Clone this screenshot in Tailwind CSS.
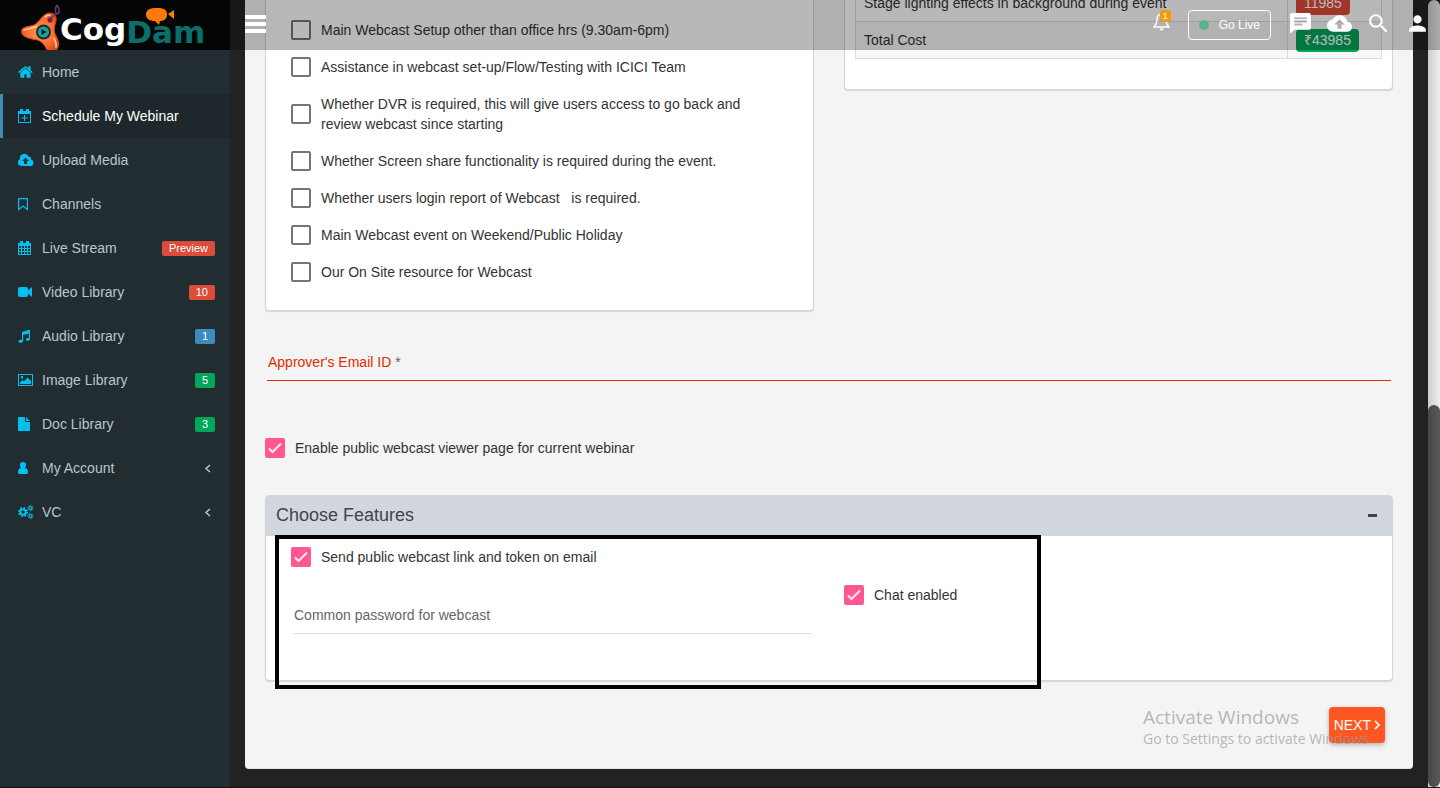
<!DOCTYPE html>
<html lang="en">
<head>
<meta charset="utf-8">
<title>CogDam - Schedule My Webinar</title>
<script src="https://cdn.jsdelivr.net/npm/@tailwindcss/browser@4"></script>
</head>
<body class="relative flex h-screen overflow-hidden border-b border-[#1c1319] bg-[#222222] font-['Liberation_Sans',sans-serif] text-sm text-[#333333]">

<aside class="flex w-[230px] shrink-0 flex-col bg-[#222d32]">
  <a href="#" aria-label="CogDam" class="relative flex h-[50px] overflow-hidden bg-[#040606] pl-5">
    <svg class="h-[50px] w-10 shrink-0" viewBox="0 0 40 50">
      <defs><radialGradient id="spin" cx="50%" cy="50%" r="60%"><stop offset="0" stop-color="#ff9a5a"/><stop offset=".6" stop-color="#fb6e35"/><stop offset="1" stop-color="#d9440f"/></radialGradient></defs>
      <path d="M1.500 31.500C1.500 26 9 27 14 25c6-3 8-11 15-12 7 0 8 5 6.500 10-1.500 5-2 8 0 12 3 5 4.500 11 1 15-3 3-8 2-10-1-2-4-4-7-9-9-5-1-16-2-16-8.500z" fill="url(#spin)" stroke="#d9480f"/>
      <path d="M4 30c4-1.500 8-1.500 12-3.500M25 17c1-1.500 3-2 5-2M34 38c1 3 3 6 2 9" fill="none" stroke="#ffd0a8" stroke-width="1.500" stroke-linecap="round"/>
      <circle cx="23.500" cy="32" r="7.500" fill="#1c2a2c"/><circle cx="23.500" cy="32" r="5.500" fill="#19a3a0"/>
      <path d="M21.500 29v6l5-3z" fill="#071314"/>
      <path d="M37 5c-3 4-1 6-1 9 4 0 4-4 1-9M35 14c-1 3-4 3-6 6" fill="none" stroke="#6b3a6b" stroke-width="1.500"/>
      <circle cx="30" cy="20" r="2.500" fill="#5a2a55"/>
    </svg>
    <span class="mt-[9px] font-['DejaVu_Sans',sans-serif] text-[31px] leading-10 font-bold text-white">Cog</span>
    <span class="mt-3 font-['DejaVu_Sans',sans-serif] text-[31px] leading-10 font-bold text-[#0b706c]">Dam</span>
    <svg class="absolute top-[7px] left-[146px] h-[18px] w-[29px]" viewBox="0 0 29 18"><path d="M10 1h2c6 0 9 2 9 6.500S18 14 14 14l-1 4-4-4C4 14 0 12 0 7.500S4 1 10 1zM22 7l6-4v9z" fill="#ff7a0a"/></svg>
  </a>

  <nav class="flex flex-col text-[#b8c7ce] [&_svg]:h-[14px] [&_svg]:w-[16px] [&_svg]:fill-current [&_svg]:text-[#00c0ef]">
    <a href="#" class="flex h-11 items-center gap-2 border-l-3 border-transparent px-[15px]"><svg viewBox="0 128 1792 1536"><path d="M1408 992v480q0 26-19 45t-45 19H960v-384H704v384H320q-26 0-45-19t-19-45V992l576-477 575 474q1 2 1 3zm223-69l-62 74q-8 9-21 11h-3q-13 0-21-7L832 424l-692 577q-12 8-24 7-13-2-21-11l-62-74q-8-10-7-23.500T37 878l719-599q32-26 76-26t76 26l244 204V288q0-14 9-23t23-9h192q14 0 23 9t9 23v408l219 182q10 8 11 21.500t-7 23.500z"/></svg>Home</a>
    <a href="#" aria-current="page" class="flex h-11 items-center gap-2 border-l-3 border-[#3c8dbc] bg-[#1e282c] px-[15px] text-white"><svg viewBox="0 0 16 14"><path fill-rule="evenodd" d="M0 2h2V0h3v2h3V0h3v2h2v12H0zM1 5v8h11V5zM6 6h1v2.500h2.500v1H7V12H6V9.500H3.500v-1H6z"/></svg>Schedule My Webinar</a>
    <a href="#" class="flex h-11 items-center gap-2 border-l-3 border-transparent px-[15px]"><svg viewBox="0 0 16 14"><path fill-rule="evenodd" d="M3.500 13A3.500 3.500 0 0 1 2 6.300 4.500 4.500 0 0 1 10.500 3.500 2.300 2.300 0 0 1 13 6.500 3.300 3.300 0 0 1 12 13zM7.500 4.500 4.200 8H6v3h3V8h1.800z"/></svg>Upload Media</a>
    <a href="#" class="flex h-11 items-center gap-2 border-l-3 border-transparent px-[15px]"><svg viewBox="0 0 16 14"><path d="M.6 1.600h8.800v11L5 9 .6 12.600z" style="fill:none" stroke="currentColor" stroke-width="1.200"/></svg>Channels</a>
    <a href="#" class="flex h-11 items-center gap-2 border-l-3 border-transparent px-[15px]"><svg viewBox="0 0 16 14"><path fill-rule="evenodd" d="M0 2h2V0h3v2h3V0h3v2h2v12H0zM1 5v2h2V5zm3 0v2h2V5zm3 0v2h2V5zm3 0v2h2V5zM1 8v2h2V8zm3 0v2h2V8zm3 0v2h2V8zm3 0v2h2V8zM1 11v2h2v-2zm3 0v2h2v-2zm3 0v2h2v-2zm3 0v2h2v-2z"/></svg>Live Stream<span class="ml-auto rounded-xs bg-[#dd4b39] px-[7px] text-[11px] leading-[15px] text-white">Preview</span></a>
    <a href="#" class="flex h-11 items-center gap-2 border-l-3 border-transparent px-[15px]"><svg viewBox="0 0 16 14"><path d="M2 2h6a2 2 0 0 1 2 2v1.500L14 2v10l-4-3.500V10a2 2 0 0 1-2 2H2a2 2 0 0 1-2-2V4a2 2 0 0 1 2-2z"/></svg>Video Library<span class="ml-auto rounded-xs bg-[#dd4b39] px-[7px] text-[11px] leading-[15px] text-white">10</span></a>
    <a href="#" class="flex h-11 items-center gap-2 border-l-3 border-transparent px-[15px]"><svg viewBox="0 0 16 14"><path d="M4 3l8-2.500V10c0 2-4 2.500-4 .5 0-1 1.500-1.600 2.800-1.300V4.500L5.200 6v6c0 2-4.700 2.500-4.700.4C.5 11.200 2.600 10.500 4 11z"/></svg>Audio Library<span class="ml-auto rounded-xs bg-[#3c8dbc] px-[7px] text-[11px] leading-[15px] text-white">1</span></a>
    <a href="#" class="flex h-11 items-center gap-2 border-l-3 border-transparent px-[15px]"><svg viewBox="0 0 16 14"><path fill-rule="evenodd" d="M0 1h15v12H0zM1 2v10h13V2zM3 3h2v2.500H3zM2 11V9.500L4.500 7 6 8.500 9.500 4.500 13 8v3z"/></svg>Image Library<span class="ml-auto rounded-xs bg-[#00a65a] px-[7px] text-[11px] leading-[15px] text-white">5</span></a>
    <a href="#" class="flex h-11 items-center gap-2 border-l-3 border-transparent px-[15px]"><svg viewBox="0 0 16 14"><path d="M0 0h7v5h5v9H0zM8 0l4 4H8z"/></svg>Doc Library<span class="ml-auto rounded-xs bg-[#00a65a] px-[7px] text-[11px] leading-[15px] text-white">3</span></a>
    <a href="#" class="flex h-11 items-center gap-2 border-l-3 border-transparent px-[15px]"><svg viewBox="0 0 16 14"><path d="M5 1c4 0 3.500 4 2 6 2 0 3 2 3 4s-1 2-2 2H2c-1 0-2 0-2-2s1-4 3-4C1.500 5 1 1 5 1z"/></svg>My Account<svg class="ml-auto text-[#b8c7ce]!" viewBox="0 0 16 14"><path d="M11 4 7 7.500 11 11" style="fill:none" stroke="currentColor" stroke-width="1.500"/></svg></a>
    <a href="#" class="flex h-11 items-center gap-2 border-l-3 border-transparent px-[15px]"><svg viewBox="0 0 16 14"><g style="fill:none" stroke="currentColor"><circle cx="5" cy="7" r="2.800" stroke-width="2"/><circle cx="5" cy="7" r="4.300" stroke-width="1.600" stroke-dasharray="1.690"/><circle cx="12.500" cy="3" r="1.500" stroke-width="1.200"/><circle cx="12.500" cy="3" r="2.500" stroke-dasharray="1.310"/><circle cx="12.500" cy="11" r="1.500" stroke-width="1.200"/><circle cx="12.500" cy="11" r="2.500" stroke-dasharray="1.310"/></g></svg>VC<svg class="ml-auto text-[#b8c7ce]!" viewBox="0 0 16 14"><path d="M11 4 7 7.500 11 11" style="fill:none" stroke="currentColor" stroke-width="1.500"/></svg></a>
  </nav>
</aside>

<main class="min-w-0 flex-1 overflow-hidden px-[15px]">
  <form class="-mt-[30px] rounded-b border-b border-[#e4e4e4] bg-[#f4f4f4] px-5 pb-[25px]">
    <div class="grid grid-cols-2 items-start gap-[30px]">
      <section class="rounded-sm border border-[#d2d6de] bg-white px-[25px] pt-[41px] pb-[19px] shadow-[0_1px_1px_#d2d6de]">
        <label class="flex items-center gap-2.5 pt-2 pb-[9px] leading-5"><input type="checkbox" class="size-5 shrink-0 appearance-none rounded-xs border-2 border-[#757575]">Main Webcast Setup other than office hrs (9.30am-6pm)</label>
        <label class="flex items-center gap-2.5 pt-2 pb-[9px] leading-5"><input type="checkbox" class="size-5 shrink-0 appearance-none rounded-xs border-2 border-[#757575]">Assistance in webcast set-up/Flow/Testing with ICICI Team</label>
        <label class="flex items-center gap-2.5 pt-2 pb-[9px] leading-5"><input type="checkbox" class="size-5 shrink-0 appearance-none rounded-xs border-2 border-[#757575]"><span>Whether DVR is required, this will give users access to go back and<br>review webcast since starting</span></label>
        <label class="flex items-center gap-2.5 pt-2 pb-[9px] leading-5"><input type="checkbox" class="size-5 shrink-0 appearance-none rounded-xs border-2 border-[#757575]">Whether Screen share functionality is required during the event.</label>
        <label class="flex items-center gap-2.5 pt-2 pb-[9px] leading-5"><input type="checkbox" class="size-5 shrink-0 appearance-none rounded-xs border-2 border-[#757575]">Whether users login report of Webcast &nbsp; is required.</label>
        <label class="flex items-center gap-2.5 pt-2 pb-[9px] leading-5"><input type="checkbox" class="size-5 shrink-0 appearance-none rounded-xs border-2 border-[#757575]">Main Webcast event on Weekend/Public Holiday</label>
        <label class="flex items-center gap-2.5 pt-2 pb-[9px] leading-5"><input type="checkbox" class="size-5 shrink-0 appearance-none rounded-xs border-2 border-[#757575]">Our On Site resource for Webcast</label>
      </section>
      <section class="rounded-sm border border-[#d2d6de] bg-white px-2.5 pt-[13px] pb-[30px] shadow-[0_1px_1px_#d2d6de]">
        <table class="w-full border-collapse leading-5">
          <tbody>
            <tr class="h-[37px]"><td class="border border-[#dddddd] px-2">Stage lighting effects in background during event</td><td class="w-[94px] border border-[#dddddd] px-2"><span class="inline-block rounded-sm bg-[#dd4b39] px-2 leading-[23px] text-white">11985</span></td></tr>
            <tr class="h-[37px] bg-[#f7f7f7]"><td class="border border-[#dddddd] px-2">Total Cost</td><td class="border border-[#dddddd] px-2"><span class="inline-block rounded-sm bg-[#00a65a] px-2 leading-[23px] text-white">₹43985</span></td></tr>
          </tbody>
        </table>
      </section>
    </div>

    <div class="relative mx-0.5 mt-[34px]">
      <label for="approver" class="pointer-events-none absolute top-[7px] left-px leading-5 text-[#dd2c00]">Approver's Email ID <span class="text-[#666666]">*</span></label>
      <input id="approver" type="email" required class="block h-9 w-full border-b border-[#dd2c00] bg-transparent shadow-none outline-none">
    </div>

    <label class="mt-[57px] flex items-center gap-2.5 leading-5">
      <span class="grid size-5 shrink-0"><input type="checkbox" checked class="col-start-1 row-start-1 size-5 appearance-none rounded-xs bg-[#ff5792]"><svg class="pointer-events-none col-start-1 row-start-1 size-5" viewBox="0 0 20 20" fill="none"><path d="M4 10.500 7.500 14 16 5.500" stroke="#ffe9f1" stroke-width="2"/></svg></span>
      Enable public webcast viewer page for current webinar
    </label>

    <section class="relative mt-[37px] rounded-sm border border-[#d2d6de] bg-white shadow-[0_1px_1px_#d2d6de]">
      <header class="flex h-10 items-center justify-between bg-[#d2d6de] pr-[15px] pb-0.5 pl-2.5">
        <h3 class="text-lg leading-5 text-[#444444]">Choose Features</h3>
        <button type="button" aria-label="Collapse" class="h-[3px] w-[9px] bg-[#444444]"></button>
      </header>
      <div class="grid grid-cols-2 gap-[30px] pb-[46px]">
        <div class="pt-[11px] pl-[25px]">
          <label class="flex items-center gap-2.5 leading-5">
            <span class="grid size-5 shrink-0"><input type="checkbox" checked class="col-start-1 row-start-1 size-5 appearance-none rounded-xs bg-[#ff5792]"><svg class="pointer-events-none col-start-1 row-start-1 size-5" viewBox="0 0 20 20" fill="none"><path d="M4 10.500 7.500 14 16 5.500" stroke="#ffe9f1" stroke-width="2"/></svg></span>
            Send public webcast link and token on email
          </label>
          <div class="mx-0.5 mt-[31px]">
            <input type="text" aria-label="Common password for webcast" placeholder="Common password for webcast" class="block h-9 w-full border-b border-[#dddddd] pb-px pl-px outline-none placeholder:text-[#666666]">
          </div>
        </div>
        <div class="pt-[49px]">
          <label class="flex items-center gap-2.5 leading-5">
            <span class="grid size-5 shrink-0"><input type="checkbox" checked class="col-start-1 row-start-1 size-5 appearance-none rounded-xs bg-[#ff5792]"><svg class="pointer-events-none col-start-1 row-start-1 size-5" viewBox="0 0 20 20" fill="none"><path d="M4 10.500 7.500 14 16 5.500" stroke="#ffe9f1" stroke-width="2"/></svg></span>
            Chat enabled
          </label>
        </div>
      </div>
      <div class="pointer-events-none absolute top-[39px] left-[9px] h-[154px] w-[766px] border-4 border-black"></div>
    </section>

    <div class="mt-[26px] flex justify-end pr-2">
      <button type="button" class="flex h-9 items-center gap-[3px] rounded-sm bg-[#ff5722] px-[5px] text-white shadow-[0_2px_5px_rgba(0,0,0,.26)]">NEXT<svg class="h-2.5 w-1.5" viewBox="0 0 6 10" fill="none"><path d="M1 1l4 4-4 4" stroke="#fff" stroke-width="1.700"/></svg></button>
    </div>
  </form>
</main>

<div class="flex w-3 shrink-0 flex-col rounded-t-full bg-linear-to-r from-[#cccccc] to-[#f0f0f0] pt-[405px]">
  <div class="flex-1 rounded-full bg-linear-to-r from-[#474747] to-[#585858]"></div>
</div>

<header class="absolute top-0 right-0 left-[230px] flex h-[50px] items-center bg-black/28 pr-2.5 pl-[15px] text-white">
  <button type="button" aria-label="Toggle navigation" class="flex flex-col gap-[3px] pb-0.5"><span class="h-1 w-[21px] bg-white"></span><span class="h-1 w-[21px] bg-white"></span><span class="h-1 w-[21px] bg-white"></span></button>
  <button type="button" aria-label="Notifications" class="relative mr-[18px] mb-[7px] ml-auto">
    <svg class="h-[19px] w-[17px]" viewBox="0 0 17 19" fill="none"><path d="M8.500 2C5 2 4 4.500 4 8s-1 5-3 7h15c-2-2-3-3.500-3-7s-1-6-4.500-6z" stroke="#fff" stroke-width="1.400"/><path d="M6.500 16.500h4a2 2 0 0 1-4 0z" fill="#fff"/></svg>
    <span class="absolute -top-0.5 left-[7px] rounded-xs bg-[#f39c12] px-[3px] text-[9px] leading-3">1</span>
  </button>
  <button type="button" class="mr-[17px] flex h-[30px] items-center gap-2.5 rounded-sm border border-white px-2.5 text-xs"><span class="size-2.5 rounded-full bg-[#5faf8b]"></span>Go Live</button>
  <div class="flex gap-[14px] pb-1 [&_svg]:size-[25px] [&_svg]:fill-white">
    <button type="button" aria-label="Messages"><svg viewBox="0 0 24 24"><path d="M20 2H4c-1.100 0-1.990.9-1.990 2L2 22l4-4h14c1.100 0 2-.9 2-2V4c0-1.100-.9-2-2-2zM6 9h12v2H6V9zm8 5H6v-2h8v2zm4-6H6V6h12v2z"/></svg></button>
    <button type="button" aria-label="Upload"><svg viewBox="0 0 24 24"><path d="M19.350 10.040C18.670 6.590 15.640 4 12 4 9.110 4 6.600 5.640 5.350 8.040 2.340 8.360 0 10.910 0 14c0 3.310 2.690 6 6 6h13c2.760 0 5-2.240 5-5 0-2.640-2.050-4.780-4.650-4.960zM14 13v4h-4v-4H7l5-5 5 5h-3z"/></svg></button>
    <button type="button" aria-label="Search"><svg viewBox="0 0 24 24"><path d="M15.500 14h-.79l-.28-.27C15.410 12.590 16 11.110 16 9.500 16 5.910 13.090 3 9.500 3S3 5.910 3 9.500 5.910 16 9.500 16c1.610 0 3.090-.59 4.230-1.570l.27.28v.79l5 4.990L20.490 19l-4.990-5zm-6 0C7.010 14 5 11.990 5 9.500S7.010 5 9.500 5 14 7.010 14 9.500 11.990 14 9.500 14z"/></svg></button>
    <button type="button" aria-label="Profile"><svg viewBox="0 0 24 24"><path d="M12 12c2.210 0 4-1.790 4-4s-1.790-4-4-4-4 1.790-4 4 1.790 4 4 4zm0 2c-2.670 0-8 1.340-8 4v2h16v-2c0-2.660-5.330-4-8-4z"/></svg></button>
  </div>
</header>

<div class="pointer-events-none absolute right-[63px] bottom-[38px] w-[234px] font-['Open_Sans',sans-serif] text-[#9a9a9a]/70">
  <p class="text-[19px] leading-6">Activate Windows</p>
  <p class="text-sm leading-5">Go to Settings to activate Windows.</p>
</div>
</body>
</html>
